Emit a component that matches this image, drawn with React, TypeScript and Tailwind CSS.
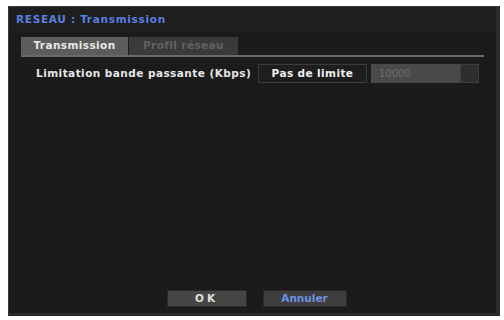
export default function App() {
  return (
    <div
      className="w-[504px] h-[320px] bg-white pl-[8px] pt-[6px]"
      style={{ fontFamily: '"DejaVu Sans", Verdana, sans-serif' }}
    >
      <div className="w-[492px] h-[310px] bg-[#1b1b1b] border border-[#3a3a3a] border-r-[4px] border-r-[#2c2c2c] border-b-[3px] border-b-[#2a2a2a] flex flex-col">
        {/* title */}
        <div className="h-[25px] flex items-center pl-[7px] bg-[#1e1e1e]">
          <span className="text-[10.5px] font-bold text-[#5b7fe0] tracking-[0.7px]">RESEAU : Transmission</span>
        </div>
        {/* tabs */}
        <div className="mx-[12px] mt-[5px] flex border-b-2 border-[#6a6a6a]">
          <div className="w-[107px] h-[18px] bg-[#5c5c5c] flex items-center justify-center text-[10.5px] font-bold text-[#e8e8e8] tracking-[0.4px]">
            Transmission
          </div>
          <div className="w-[109px] h-[18px] bg-[#3a3a3a] flex items-center justify-center text-[10.5px] font-bold text-[#626262] ml-[1px] tracking-[0.4px]">
            Profil réseau
          </div>
        </div>
        {/* row */}
        <div className="flex items-center mt-[7px] pl-[27px]">
          <span className="w-[222px] text-[10.5px] font-bold text-[#e6e6e6] whitespace-nowrap tracking-[0.45px]">Limitation bande passante (Kbps)</span>
          <div className="w-[109px] h-[19px] border border-[#3c3c3c] bg-[#1e1e1e] flex items-center justify-center text-[10.5px] font-bold text-[#f0f0f0] tracking-[0.4px]">
            Pas de limite
          </div>
          <div className="ml-[4px] w-[89px] h-[19px] bg-[#4a4a4a] flex items-center pl-[8px] text-[10px] text-[#6e6e6e]">
            10000
          </div>
          <div className="w-[19px] h-[19px] bg-[#2e2e2e] border border-[#3e3e3e]" />
        </div>
        <div className="flex-1" />
        {/* buttons */}
        <div className="flex justify-center gap-[16px] pb-[6px] pl-[8px]">
          <div className="w-[80px] h-[17px] bg-[#454545] border border-[#2a2a2a] flex items-center justify-center text-[10.5px] font-bold text-[#e0e0e0] tracking-[3px]">
            OK
          </div>
          <div className="w-[84px] h-[17px] bg-[#3e3e3e] border border-[#2a2a2a] flex items-center justify-center text-[10.5px] font-bold text-[#6f8fe0]">
            Annuler
          </div>
        </div>
      </div>
    </div>
  );
}
